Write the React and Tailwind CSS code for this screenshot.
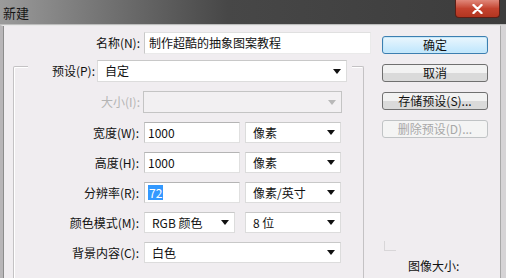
import React from "react";

const Arrow = ({ disabled }) => (
    <svg width="8" height="5" viewBox="0 0 8 5" className="shrink-0">
        <path d="M0 0 H8 L4 5 Z" fill={disabled ? "#b8b8b8" : "#111"} />
    </svg>
);

const Select = ({ className, value, disabled }) => (
    <div className={`flex items-center justify-between pl-[7px] pr-[5px] border ${disabled ? "bg-[#f2f0f2] border-[#c4c4c4]" : "bg-white border-[#dcdcdc] border-t-[#c8c8c8]"} ${className}`}>
        <span className="leading-none">{value}</span>
        <Arrow disabled={disabled} />
    </div>
);

const Field = ({ className, children }) => (
    <div className={`flex items-center pl-[3px] bg-white border border-[#e0e0e0] border-t-[#b4b4b4] border-l-[#c8c8c8] ${className}`}>
        {children}
    </div>
);

const Row = ({ label, disabled, children, className = "" }) => (
    <div className={`flex items-center h-[21px] mt-[9px] ${className}`}>
        <div className={`w-[126px] text-right pr-[1px] ${disabled ? "text-[#b0b0b0]" : ""}`}>{label}</div>
        <div className="flex items-center gap-[5px] ml-[4px]">{children}</div>
    </div>
);

const Button = ({ children, primary, disabled }) => (
    <div
        className={`w-[106px] h-[18px] flex items-center justify-center rounded-[3px] border leading-none ${
            primary
                ? "border-[#3c7fb1] bg-gradient-to-b from-[#eaf6fd] to-[#bee6fd] shadow-[inset_0_0_0_1px_#c8e8f8]"
                : disabled
                ? "border-[#c0c3c5] bg-[#f4f4f4] text-[#a8a8a8]"
                : "border-[#707070] bg-gradient-to-b from-[#f2f2f2] from-50% to-[#dadada] to-50%"
        }`}
    >
        {children}
    </div>
);

export default function App() {
    return (
        <div className="w-[506px] h-[278px] overflow-hidden bg-[#d6d4d6] flex flex-col text-[12px] text-[#111] font-['Noto_Sans_CJK_SC','Microsoft_YaHei',sans-serif]">
            {/* title bar */}
            <div className="relative h-[25px] shrink-0 flex items-center pl-[3px] bg-gradient-to-r from-[#9b9b9b] via-[#474747] via-45% to-[#3c3c3c] border-b border-[#bdbdbd]">
                <span className="text-[13px] text-[#161616] leading-none">新建</span>
                <div className="absolute right-[6px] top-0 w-[45px] h-[18px] rounded-b-[4px] border border-t-0 border-[#5b1f17] bg-gradient-to-b from-[#e0877a] via-[#c4432f] to-[#b23520] flex items-center justify-center">
                    <svg width="11" height="10" viewBox="0 0 11 10">
                        <path d="M1.5 1 L9.5 9 M9.5 1 L1.5 9" stroke="#fff" strokeWidth="2.4" strokeLinecap="round" />
                    </svg>
                </div>
            </div>

            {/* body */}
            <div className="flex-1 flex w-[501px] bg-[#f0edf0] border-l-[3px] border-l-[#b8b6b8] border-r border-r-[#a8a8a8] border-t border-t-[#e8e8e8]">
                <div className="w-[376px] flex flex-col pt-[6px] border-l border-[#8c8c8c]">
                    {/* name */}
                    <div className="flex items-center h-[22px]">
                        <div className="w-[136px] text-right">名称(N):</div>
                        <Field className="ml-[4px] w-[227px] h-[22px] border-[#eaeaea] border-t-[#e0e0e0]">
                            <span className="pl-[1px]">制作超酷的抽象图案教程</span>
                        </Field>
                    </div>

                    {/* preset group */}
                    <div className="ml-[9px] mt-[12px] w-[351px] flex-1 border border-b-0 border-[#c4c2c4] rounded-t-[2px] shadow-[1px_1px_0_#ffffff_inset]">
                        <div className="flex items-center h-[22px] -mt-[7px] ml-[14px] w-[324px] bg-[#f0edf0]">
                            <div className="w-[67px] text-right">预设(P):</div>
                            <Select className="ml-[2px] w-[250px] h-[22px]" value="自定" />
                        </div>

                        <div className="flex items-center h-[22px] mt-[9px]">
                            <div className="w-[126px] text-right text-[#b4b4b4]">大小(I):</div>
                            <Select className="ml-[3px] w-[199px] h-[22px]" value="" disabled />
                        </div>

                        <Row label="宽度(W):">
                            <Field className="w-[96px] h-[21px]">1000</Field>
                            <Select className="w-[96px] h-[21px]" value="像素" />
                        </Row>
                        <Row label="高度(H):">
                            <Field className="w-[96px] h-[21px]">1000</Field>
                            <Select className="w-[96px] h-[21px]" value="像素" />
                        </Row>
                        <Row label="分辨率(R):">
                            <Field className="w-[96px] h-[21px]">
                                <span className="bg-[#3399ff] text-white px-[1px] leading-[15px]">72</span>
                            </Field>
                            <Select className="w-[96px] h-[21px]" value="像素/英寸" />
                        </Row>
                        <Row label="颜色模式(M):">
                            <Select className="w-[91px] h-[21px]" value="RGB 颜色" />
                            <Select className="ml-[5px] w-[96px] h-[21px]" value="8 位" />
                        </Row>
                        <Row label="背景内容(C):">
                            <Select className="w-[197px] h-[21px]" value="白色" />
                        </Row>
                    </div>
                </div>

                {/* buttons */}
                <div className="flex flex-col pt-[10px] ml-[3px] w-[118px]">
                    <div className="flex flex-col gap-[10px]">
                        <Button primary>确定</Button>
                        <Button>取消</Button>
                        <Button>存储预设(S)...</Button>
                        <Button disabled>删除预设(D)...</Button>
                    </div>
                    <div className="mt-auto ml-[2px] w-[12px] h-[10px] border-l border-b border-[#d8d6d8]" />
                    <div className="mt-[9px] mb-[6px] ml-[26px] leading-none">图像大小:</div>
                </div>
            </div>
        </div>
    );
}
